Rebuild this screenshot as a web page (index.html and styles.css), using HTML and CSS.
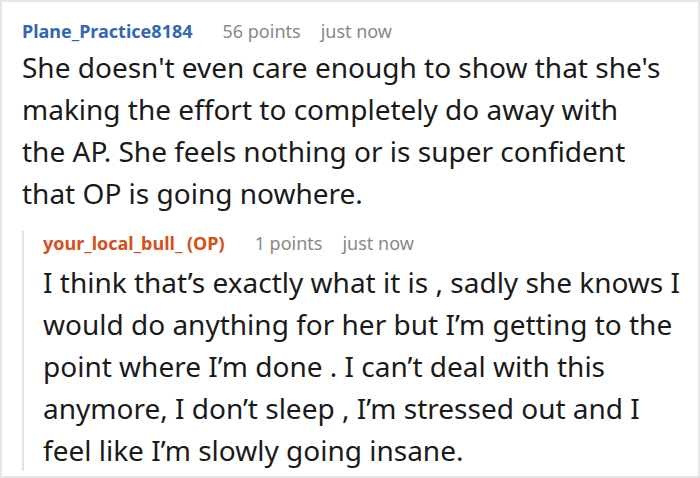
FILE: index.html
```html
<!DOCTYPE html>
<html>
<head>
<meta charset="utf-8">
<link rel="stylesheet" href="styles.css">
</head>
<body>
<div class="frame">
  <div class="comment">
    <div class="meta">
      <span class="author">Plane_Practice8184</span>
      <span class="info">56 points</span>
      <span class="info">just now</span>
    </div>
    <p class="text main-text">She doesn't even care enough to show that she's making the effort to completely do away with the AP. She feels nothing or is super confident that OP is going nowhere.</p>
    <div class="reply">
      <div class="meta">
        <span class="author op">your_local_bull_ (OP)</span>
        <span class="info">1 points</span>
        <span class="info">just now</span>
      </div>
      <p class="text">I think that’s exactly what it is , sadly she knows I would do anything for her but I’m getting to the point where I’m done . I can’t deal with this anymore, I don’t sleep , I’m stressed out and I feel like I’m slowly going insane.</p>
    </div>
  </div>
</div>
</body>
</html>
```
FILE: styles.css
```css
html, body {
  margin: 0;
  padding: 0;
  background: #fff;
}
.frame {
  width: 700px;
  height: 478px;
  box-sizing: border-box;
  border: 2px solid #e6e6e6;
  overflow: hidden;
  font-family: "Noto Sans", sans-serif;
  color: #1a1a1a;
}
.comment {
  padding: 17px 8px 0 20px;
}
.meta {
  display: flex;
  gap: 20px;
  font-size: 18px;
  line-height: 24px;
}
.author {
  font-weight: bold;
  color: #3466b4;
  margin-right: 10px;
}
.author.op {
  color: #d4501c;
}
.info {
  color: #888;
}
.text {
  margin: 3px 0 0 0;
  font-size: 28px;
  line-height: 42px;
}
.main-text {
  max-width: 640px;
}
.reply {
  margin-top: 26px;
  padding-left: 19px;
  border-left: 2px solid #e3e3e3;
}
.reply .meta {
  margin-top: -9px;
}
.reply .text {
  margin: 6px 0 -13px 0;
}
```
